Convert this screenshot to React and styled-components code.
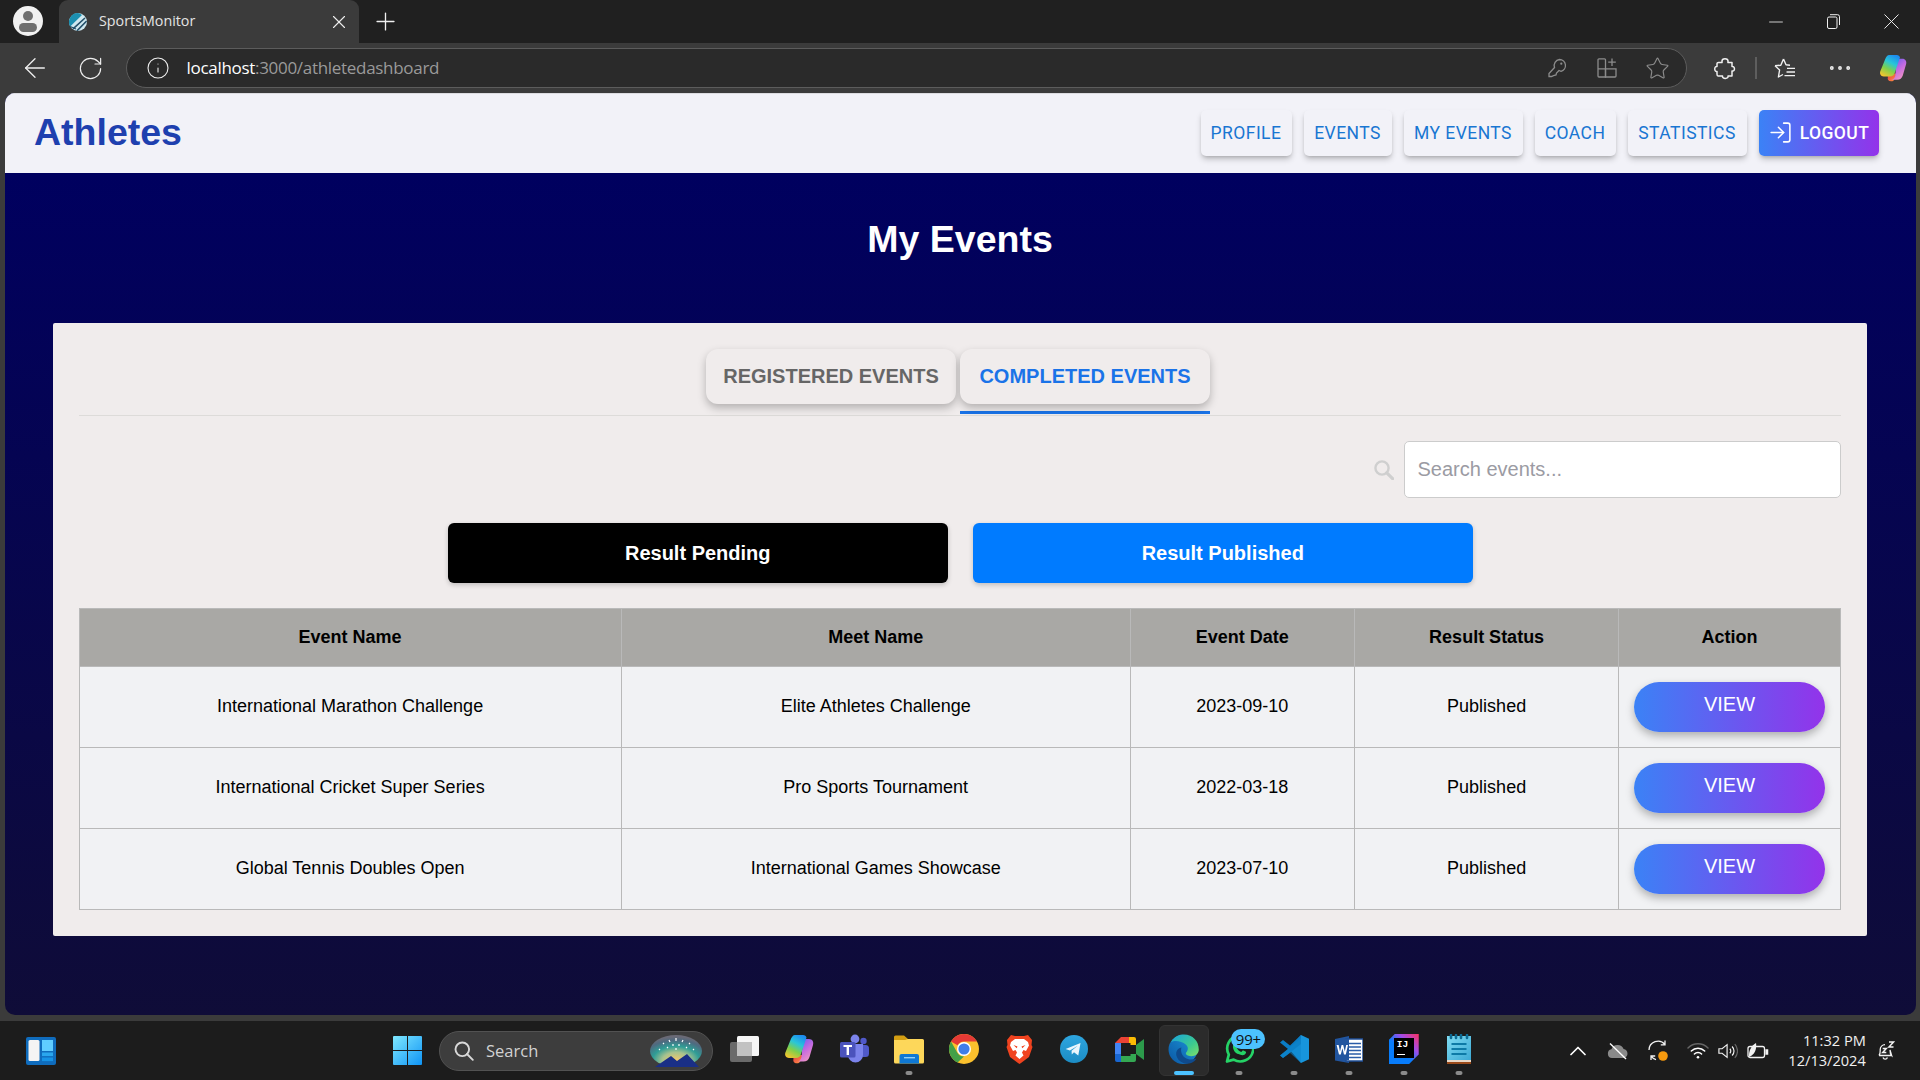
import React from "react";
import styled, { createGlobalStyle } from "styled-components";
import { ArrowLeft, RotateCw, Info, X, Plus, Minus, LogIn, Star, ChevronUp, MoreHorizontal } from "lucide-react";

const Global = createGlobalStyle`
  html, body { margin: 0; padding: 0; height: 100%; overflow: hidden; background: #3b3b3b; }
  * { box-sizing: border-box; }
  #root { height: 1080px; }
`;

const Screen = styled.div`
  width: 1920px; height: 1080px; display: flex; flex-direction: column;
  background: #3b3b3b; font-family: "Liberation Sans", Arial, sans-serif;
`;

/* ---------- browser chrome ---------- */
const TabStrip = styled.div`
  height: 43px; flex: none; background: #202020; display: flex; align-items: stretch; padding-left: 13px;
`;
const Avatar = styled.div`
  width: 30px; height: 30px; margin-top: 6px; border-radius: 50%; background: #f1f1f1;
  display: flex; align-items: center; justify-content: center;
`;
const BrowserTab = styled.div`
  width: 300px; margin-left: 16px; background: #3b3b3b; border-radius: 9px 9px 0 0;
  display: flex; align-items: center; padding-left: 10px; color: #e8e8e8;
`;
const TabTitle = styled.span`
  margin: 0 0 2px 12px; flex: 1; font: 14.3px "Open Sans", sans-serif; color: #e4e4e4;
`;
const TabClose = styled.span`
  width: 22px; margin-right: 9px; display: flex; justify-content: center;
`;
const NewTab = styled.div`
  width: 30px; margin-left: 11px; padding-bottom: 1px; display: flex; align-items: center; justify-content: center;
`;
const WindowControls = styled.div`
  margin-left: auto; display: flex; align-items: center;
`;
const ControlSlot = styled.div`
  width: ${(p) => p.$w}px; display: flex; justify-content: center; align-items: center;
`;

const Toolbar = styled.div`
  height: 50px; flex: none; background: #3b3b3b; display: flex; align-items: center; padding: 0 0 0 7px;
`;
const ToolSlot = styled.div`
  width: ${(p) => p.$w || 40}px; height: 36px; flex: none; display: flex; align-items: center; justify-content: center;
  margin-left: ${(p) => p.$ml || 0}px;
`;
const AddressBar = styled.div`
  width: 1561.5px; height: 40px; margin-left: 7.5px; flex: none; display: flex; align-items: center;
  background: #2a2a2a; border: 1.5px solid #5c5c5c; border-radius: 20px; padding-left: 19px;
`;
const Url = styled.div`
  margin: 0 0 2px 17px; flex: 1; font: 17px "Open Sans", sans-serif; color: #9a9a9a; letter-spacing: -0.3px;
  b { color: #fff; font-weight: 400; }
`;
const AddressIcons = styled.div`
  display: flex; align-items: center; margin-right: 4px;
`;
const Divider = styled.div`
  width: 1.5px; height: 22px; background: #5e5e5e; margin: 0 13.5px 0 11px; flex: none;
`;

/* ---------- page viewport ---------- */
const Viewport = styled.div`
  flex: none; height: 922px; margin: 0 4.5px; border-radius: 10px; overflow: hidden;
  display: flex; flex-direction: column;
  background: linear-gradient(to bottom, #00005f 9%, #0f0c38 100%);
`;
const NavBar = styled.header`
  height: 80px; flex: none; background: #f2f2f8; display: flex; align-items: center; padding: 0 37px 2px 29.5px;
  border-top: 1px solid #dcdce0;
`;
const Brand = styled.div`
  font-size: 37.5px; font-weight: 700; color: #1e40af;
`;
const NavLinks = styled.nav`
  margin-left: auto; display: flex; gap: 12px;
`;
const NavButton = styled.button`
  height: 46px; width: ${(p) => p.$w}px; border: 0; border-radius: 5px; background: #f2f2f8; color: #1976d2;
  font: 400 17.5px Roboto, sans-serif; letter-spacing: 0.45px; padding: 0;
  box-shadow: 0 4px 6px -1px rgba(0,0,0,.22), 0 2px 4px -2px rgba(0,0,0,.2);
`;
const LogoutButton = styled(NavButton)`
  background: linear-gradient(to right, #3b82f6, #9333ea); color: #fff; font-weight: 500;
  display: flex; align-items: center; justify-content: center; gap: 7px;
`;
const PageTitle = styled.h1`
  margin: 0; height: 150px; padding-top: 44px; text-align: center; color: #fff; font-size: 37.5px; line-height: 45px; font-weight: 700;
`;
const Panel = styled.main`
  margin: 0 49px 0 48px; background: #f0ecec; padding: 26px 26px 26px; border-radius: 2px;
`;
const TabsBar = styled.div`
  display: flex; justify-content: center; gap: 4px; padding: 0 3px 1px 0; border-bottom: 1.5px solid #dddbd9;
`;
const TabItem = styled.div`
  width: 250px; height: 65px; border-bottom: 3.75px solid ${(p) => (p.$active ? "#1a73e8" : "transparent")};
`;
const TabCard = styled.div`
  height: 55px; border-radius: 12px; background: #f0ecec; display: flex; align-items: center; justify-content: center;
  font-size: 20px; font-weight: 700; color: ${(p) => (p.$active ? "#1a73e8" : "#666")};
  box-shadow: 0 4px 8px rgba(0,0,0,.25);
`;
const SearchRow = styled.div`
  display: flex; justify-content: flex-end; align-items: center; gap: 10px; margin-top: 25px;
`;
const SearchInput = styled.input`
  width: 436.5px; height: 57px; border: 1.25px solid #ccc; border-radius: 5px; background: #fff;
  font: 20px "Liberation Sans", Arial, sans-serif; padding: 0 12.5px; outline: none;
  &::placeholder { color: #9b9ba3; opacity: 1; }
`;
const FilterRow = styled.div`
  display: flex; justify-content: center; gap: 25px; margin-top: 25px; padding-left: 1.5px;
`;
const FilterButton = styled.button`
  width: 500px; height: 60px; border: 0; border-radius: 6px; background: ${(p) => p.$bg}; color: #fff;
  font: 700 20px "Liberation Sans", Arial, sans-serif; box-shadow: 0 2px 5px rgba(0,0,0,.2);
`;
const EventTable = styled.table`
  width: 100%; margin-top: 25px; border-collapse: collapse; table-layout: fixed; font-size: 18px; color: #000;
`;
const HeadCell = styled.th`
  height: 58px; background: #a9a8a5; border: 1.25px solid #b9b9b9; font-weight: 700; text-align: center; padding: 0;
`;
const Cell = styled.td`
  height: 81px; background: #f1f2f4; border: 1.25px solid #b9b9b9; text-align: center; padding: 0 0 2px;
`;
const ViewButton = styled.button`
  display: block; margin: 2px auto 0; width: 191px; height: 50px; border: 0; border-radius: 25px; padding: 0 0 6px;
  background: linear-gradient(to right, #3b82f6, #9333ea); color: #fff;
  font: 400 20px "Liberation Sans", Arial, sans-serif;
  box-shadow: 0 4px 8px rgba(0,0,0,.28);
`;

/* ---------- taskbar ---------- */
const Taskbar = styled.footer`
  margin-top: 6px; height: 59px; flex: none; background: #1c1c1c; display: flex; align-items: center; padding-left: 26px;
`;
const StartSlot = styled.div`
  margin-left: 337px; width: 29px; height: 29px; flex: none; display: flex;
`;
const SearchPill = styled.div`
  margin-left: 17px; width: 274px; height: 40px; flex: none; border-radius: 20px; background: #3d3d3d; border: 1px solid #525252;
  display: flex; align-items: center; padding: 0 9px 0 14px; color: #d2d2d2; font: 16.5px "Open Sans", sans-serif;
`;
const PillLabel = styled.span`
  margin-left: 12px; flex: 1;
`;
const AppRow = styled.div`
  margin-left: 4px; display: flex; flex: none;
`;
const AppSlot = styled.div`
  position: relative; width: 54.95px; height: 51px; display: flex; align-items: center; justify-content: center; padding-bottom: 3px;
`;
const AppGlyph = styled.span`
  position: relative; display: flex;
`;
const ActiveBack = styled.div`
  position: absolute; left: 2.4px; right: 2.4px; top: 0; bottom: 0; border-radius: 6px; background: #2b2b2b; border: 1px solid #333;
`;
const RunDot = styled.div`
  position: absolute; bottom: 1px; left: 50%; transform: translateX(-50%); height: 4px; border-radius: 2px;
  width: ${(p) => (p.$active ? 20 : 7)}px; background: ${(p) => (p.$active ? "#4cc2ff" : "#8b8b8b")};
`;
const Badge = styled.div`
  position: absolute; top: 4px; left: 20px; width: 34px; height: 20px; border-radius: 10px; background: #4cc2ff; color: #111;
  font: 15px "Open Sans", sans-serif; display: flex; align-items: center; justify-content: center; letter-spacing: -0.2px;
`;
const Tray = styled.div`
  margin-left: 71.7px; display: flex; align-items: center; flex: none; color: #fff;
`;
const TraySlot = styled.div`
  width: ${(p) => p.$w}px; display: flex; justify-content: center; align-items: center;
`;
const Clock = styled.div`
  width: 88px; text-align: right; color: #f0f0f0; font: 14.6px/20px "Open Sans", sans-serif; margin-bottom: 2px; white-space: nowrap;
`;
const BellSlot = styled.div`
  width: 32px; margin-left: 4px; display: flex; justify-content: center;
`;

/* ---------- icons ---------- */
const WIN = { width: 30, height: 30, viewBox: "0 0 30 30" };

const CopilotIcon = ({ size = 30, id = "c" }) => (
  <svg width={size} height={size} viewBox="0 0 30 30">
    <defs>
      <linearGradient id={`${id}a`} x1="0.7" y1="0" x2="0.2" y2="1">
        <stop offset="0" stopColor="#1d8cf0" /><stop offset=".35" stopColor="#29c6d8" /><stop offset=".65" stopColor="#7ed04b" /><stop offset="1" stopColor="#f4c52e" />
      </linearGradient>
      <linearGradient id={`${id}b`} x1="0.2" y1="0" x2="0.8" y2="1">
        <stop offset="0" stopColor="#6a5cf0" /><stop offset=".5" stopColor="#c66be0" /><stop offset="1" stopColor="#f59ac0" />
      </linearGradient>
      <linearGradient id={`${id}d`} x1="0" y1="0" x2="1" y2="1">
        <stop offset="0" stopColor="#e8354a" /><stop offset="1" stopColor="#ff9a3c" />
      </linearGradient>
    </defs>
    <path d="M9 21 H19 L16.5 27 C15.8 28.7 14.5 29.3 13 29.3 C10 29.3 8.8 27 9.5 25z" fill={`url(#${id}d)`} />
    <path d="M19 5 H25 C28.3 5 30 7.8 29 11 L25.5 23 C24.5 26 22.5 27.5 19.5 27.5 H13 C15.6 27.5 16.8 25.5 17.5 23z" fill={`url(#${id}b)`} />
    <path d="M11 1 H19 C21 1 22 2 22.5 3.5 L17 20 C16.3 22.5 14.5 24 12 24 H5 C2 24 .4 21.6 1.4 18.6 L6.5 6 C7.5 3 9 1 11 1z" fill={`url(#${id}a)`} />
  </svg>
);

const EdgeIcon = () => (
  <svg {...WIN} width="31" height="31">
    <defs>
      <linearGradient id="eg1" x1="0" y1="1" x2="1" y2="0"><stop offset="0" stopColor="#0b56a4" /><stop offset="1" stopColor="#1d9bdb" /></linearGradient>
      <linearGradient id="eg2" x1="0" y1="0" x2="1" y2="1"><stop offset="0" stopColor="#1aa3dc" /><stop offset=".6" stopColor="#3ccb8f" /><stop offset="1" stopColor="#7fe06a" /></linearGradient>
    </defs>
    <circle cx="14.5" cy="15" r="14" fill="url(#eg1)" />
    <path d="M3 8 C6 2 12 .5 15.5 .6 C24 .8 29.8 7 29.8 15 C29.8 19 26.5 21.5 22.5 21.5 C19 21.5 16.5 20 17.5 18 C19.5 16 20 13 17.5 10.5 C13 6.5 6 6 3 8z" fill="url(#eg2)" />
    <path d="M13 13 C8.5 14 7 18 8.5 22 C10.5 27.5 17 30 22.5 28 C25 27 26.8 25.5 27.6 23.8 C24 25 19.5 25.3 16.5 23 C13 20.5 12 16 13 13z" fill="#0f4a8c" />
  </svg>
);

const Icons = {
  widgets: (
    <svg width="30" height="28" viewBox="0 0 30 28">
      <rect width="30" height="28" rx="2" fill="#0f6cbd" />
      <rect x="2.5" y="3" width="11" height="21" rx="1.5" fill="#f4f4f4" />
      <rect x="16" y="3" width="11" height="11" fill="#60cdff" />
      <rect x="16" y="15.5" width="11" height="3.6" fill="#2aa7ee" />
      <rect x="16" y="20.5" width="11" height="3.6" fill="#1693e6" />
    </svg>
  ),
  start: (
    <svg width="29" height="29" viewBox="0 0 29 29">
      <defs><linearGradient id="st" x1="0" y1="0" x2="1" y2="1"><stop offset="0" stopColor="#7fe8ff" /><stop offset="1" stopColor="#0f94f5" /></linearGradient></defs>
      <path d="M0 1 a1 1 0 0 1 1-1 H14 V14 H0z M15 0 H28 a1 1 0 0 1 1 1 V14 H15z M0 15 H14 V29 H1 a1 1 0 0 1-1-1z M15 15 H29 V28 a1 1 0 0 1-1 1 H15z" fill="url(#st)" />
    </svg>
  ),
  taskview: (
    <svg {...WIN}>
      <rect x="1" y="8" width="22" height="20" rx="2" fill="#6a6a6a" />
      <rect x="8" y="2" width="22" height="20" rx="1.5" fill="#f6f6f6" />
      <rect x="8" y="8" width="15" height="14" fill="#c2c2c2" />
    </svg>
  ),
  teams: (
    <svg {...WIN}>
      <circle cx="24.5" cy="7" r="3.2" fill="#5059c9" />
      <rect x="20" y="11" width="10" height="12" rx="3.5" fill="#5059c9" />
      <circle cx="16" cy="5" r="4.4" fill="#7b83eb" />
      <path d="M9 10 H24 V21 a7.5 7.5 0 0 1-15 0z" fill="#7b83eb" />
      <rect x="1" y="8" width="15.5" height="15.5" rx="1.5" fill="#4b53bc" />
      <path d="M4.5 11 H13 V13 H10 V21 H7.6 V13 H4.5z" fill="#fff" />
    </svg>
  ),
  explorer: (
    <svg {...WIN} height="29" viewBox="0 0 30 29">
      <path d="M0 2 a1.5 1.5 0 0 1 1.5-1.5 H10 L14 4 H28 V10 H0z" fill="#d39e12" />
      <path d="M0 5 H11 L14 4 H28.5 a1.5 1.5 0 0 1 1.5 1.5 V27 a1.5 1.5 0 0 1-1.5 1.5 H1.5 A1.5 1.5 0 0 1 0 27z" fill="#fdd75a" />
      <path d="M5.5 21 a2 2 0 0 1 2-2 H23 a2 2 0 0 1 2 2 v7.5 H5.5z" fill="#0f78d4" />
      <rect x="10" y="22" width="11" height="1.4" fill="#8fd0f8" />
    </svg>
  ),
  chrome: (
    <svg {...WIN}>
      <circle cx="15" cy="15" r="15" fill="#fbc02d" />
      <path d="M15 0 A15 15 0 0 1 28 7.5 H15 A7.5 7.5 0 0 0 8.5 11.3 L2 7.5 A15 15 0 0 1 15 0z" fill="#e53935" />
      <path d="M2 7.5 L8.5 19 A7.5 7.5 0 0 0 15 22.5 L8.5 28.5 A15 15 0 0 1 2 7.5z" fill="#43a047" />
      <circle cx="15" cy="15" r="7" fill="#fff" />
      <circle cx="15" cy="15" r="5.6" fill="#3f7de8" />
    </svg>
  ),
  brave: (
    <svg width="27" height="30" viewBox="0 0 27 30">
      <path d="M5 1 L9 2 H18 L22 1 L26 6 L25.5 11 L26.5 13 L23 23 L15 29 L13.5 30 L12 29 L4 23 L.5 13 L1.5 11 L1 6z" fill="#f0431f" />
      <path d="M5 8 L9 5 H18 L22 8 L23 11.5 L20 17 L17.5 16 L16 18.5 L17.5 21.5 L13.5 25 L9.5 21.5 L11 18.5 L9.5 16 L7 17 L4 11.5z" fill="#fff" />
      <path d="M7.5 11 l4 1.4 -.8 1.8z M19.5 11 l-4 1.4 .8 1.8z" fill="#f0431f" />
    </svg>
  ),
  telegram: (
    <svg {...WIN} width="28" height="28">
      <defs><linearGradient id="tg" x1="0.5" y1="0" x2="0.5" y2="1"><stop offset="0" stopColor="#2ea6e0" /><stop offset="1" stopColor="#1c8cc4" /></linearGradient></defs>
      <circle cx="15" cy="15" r="15" fill="url(#tg)" />
      <path d="M6 15 L22 8.5 L19.6 22 L15 18.6 L12.6 21 L12.4 17 L19 11.5 L10.6 16.5z" fill="#eaf6fc" />
    </svg>
  ),
  meet: (
    <svg width="29" height="25" viewBox="0 0 29 25">
      <path d="M6 0 H16 V6 H6z" fill="#ea4335" />
      <path d="M6 0 V6 H0z" fill="#ea4335" />
      <path d="M14 0 H19 a2 2 0 0 1 2 2 V8 H15.5 V6 H14z" fill="#fbbc04" />
      <path d="M0 6 H6 V17 H0z" fill="#4285f4" />
      <path d="M0 17 H6 V25 H2 a2 2 0 0 1-2-2z" fill="#1967d2" />
      <path d="M6 19 H15.5 V17 H21 V23 a2 2 0 0 1-2 2 H6z" fill="#34a853" />
      <path d="M21 8 V17 L29 23 V2z" fill="#2c9a4b" />
    </svg>
  ),
  edge: <EdgeIcon />,
  whatsapp: (
    <svg {...WIN}>
      <path d="M3 27.5 L4.8 20.6 A13 13 0 1 1 9.6 25.6z" fill="none" stroke="#25d366" strokeWidth="2.7" strokeLinejoin="round" />
      <path d="M10.5 9 c1.4-1 2-.6 2.7 1 l.5 1.4 -1.4 1.8 c1.2 2.3 2.8 3.8 5 4.8 l1.6-1.7 2.6 1.2 c.7.3.7 1 .3 1.8 -1 2-3.4 2.4-6 1.2 C12 20 9.6 17.4 9 13.6 8.7 11.4 9.3 10 10.5 9z" fill="#25d366" />
    </svg>
  ),
  vscode: (
    <svg {...WIN}>
      <path d="M22 1 L30 4.8 V25.2 L22 29 L10 15z" fill="#1795dc" />
      <path d="M22 1 V10 L8 21 L4 24 L1 21.5 L9 15 L1 8.5 L4 6 L11 11.5z" fill="#0a7cc4" />
      <path d="M4 24 L1 21.5 L22 4 V10 L22 20 V29 L11 19 z" fill="#0f86ce" opacity=".55" />
    </svg>
  ),
  word: (
    <svg width="28" height="27" viewBox="0 0 28 27">
      <path d="M0 3 L14 0 V27 L0 24.5z" fill="#21559f" />
      <rect x="11" y="3" width="17" height="22" fill="#fff" />
      <rect x="11" y="3" width="17" height="22" fill="none" stroke="#1e4e96" strokeWidth="1.5" />
      <path d="M14 7.5 H26 M14 11 H26 M14 14.5 H26 M14 18 H26 M14 21.5 H26" stroke="#2a5ca8" strokeWidth="1.6" />
      <rect x="0" y="3" width="14" height="21" fill="#21559f" />
      <path d="M1.6 9 H3.6 L5 15.6 L6.6 9 H8.2 L9.8 15.6 L11.2 9 H13 L10.8 18.5 H9 L7.4 12.2 L5.8 18.5 H4z" fill="#fff" />
    </svg>
  ),
  notepad: (
    <svg width="26" height="30" viewBox="0 0 26 30">
      <defs><linearGradient id="np" x1="0" y1="0" x2="1" y2="1"><stop offset="0" stopColor="#7fdcf3" /><stop offset="1" stopColor="#3ca9d4" /></linearGradient></defs>
      <rect x="1" y="2" width="24" height="24" fill="url(#np)" />
      <rect x="1" y="26" width="24" height="2" fill="#e8d8c8" />
      <rect x="1" y="28" width="24" height="2" fill="#9a4a1a" />
      <path d="M5 1 v3 M10 1 v3 M15 1 v3 M21 1 v3" stroke="#0d6a92" strokeWidth="2.6" strokeLinecap="round" />
      <path d="M5.5 10 H20.5 M5.5 15 H20.5 M5.5 20 H20.5" stroke="#0d7aa6" strokeWidth="2" />
    </svg>
  ),
  search: (
    <svg width="20" height="20" viewBox="0 0 20 20" fill="none" stroke="#d8d8d8" strokeWidth="1.9">
      <circle cx="8.3" cy="8.3" r="6.8" /><path d="M13 13 L18.8 18.8" strokeLinecap="round" />
    </svg>
  ),
  panelSearch: (
    <svg width="20" height="20" viewBox="0 0 20 20" fill="none" stroke="#cfcfcf" strokeWidth="2.4">
      <circle cx="8" cy="8" r="6.6" /><path d="M12.8 12.8 L18.6 18.6" strokeWidth="3.2" strokeLinecap="round" />
    </svg>
  ),
  art: (
    <svg width="54" height="32" viewBox="0 0 54 32">
      <defs>
        <radialGradient id="ar" cx=".5" cy=".8" r=".75"><stop offset="0" stopColor="#f6c869" /><stop offset=".35" stopColor="#a7c28e" /><stop offset=".6" stopColor="#2f9d96" /><stop offset=".85" stopColor="#4e6a80" /><stop offset="1" stopColor="#6a6a76" /></radialGradient>
      </defs>
      <ellipse cx="27" cy="16" rx="26" ry="16" fill="url(#ar)" />
      <path d="M6 32 L22 21 L28 26 L38 19 L50 32z" fill="#1a2f86" />
      <path d="M10 14 l1 1 M14 8 l1 1 M20 5 l1 2 M27 3 v3 M34 5 l-1 2 M41 8 l-1 1 M45 14 l-1 1 M18 12 l1 1 M38 12 l-1 1 M24 9 v2 M30 9 v2 M27 13 v2" stroke="#fff" strokeWidth="1.2" />
    </svg>
  ),
  onedrive: (
    <svg width="22" height="18" viewBox="0 0 22 18">
      <path d="M5 16 a4.4 4.4 0 0 1-.6-8.7 A6.6 6.6 0 0 1 16.6 7 a4.6 4.6 0 0 1 .4 9z" fill="#8a8a8a" />
      <path d="M3 1.5 L19 17" stroke="#fff" strokeWidth="1.4" />
    </svg>
  ),
  sync: (
    <svg width="22" height="24" viewBox="0 0 22 24" fill="none" stroke="#f2f2f2" strokeWidth="1.3">
      <path d="M2 11 A9 9 0 0 1 18 5.5 M18 1.5 V5.8 H13.8" />
      <path d="M4 21 V17 H8.2 M4 17.2 A9 9 0 0 0 9 20.6" />
      <circle cx="16" cy="17" r="4.8" fill="#f79a0e" stroke="none" />
    </svg>
  ),
  wifi: (
    <svg width="22" height="18" viewBox="0 0 22 18" fill="none" stroke="#fff" strokeWidth="1.5" strokeLinecap="round">
      <path d="M1 6 A14 14 0 0 1 21 6" stroke="#666" />
      <path d="M4.3 9 A9.5 9.5 0 0 1 17.7 9" />
      <path d="M7.4 12 A5 5 0 0 1 14.6 12" />
      <circle cx="11" cy="15.3" r="1.3" fill="#fff" stroke="none" />
    </svg>
  ),
  volume: (
    <svg width="22" height="18" viewBox="0 0 22 18" fill="none" stroke="#f2f2f2" strokeWidth="1.3">
      <path d="M1 6.5 H4.5 L10 2 V16 L4.5 11.5 H1z" />
      <path d="M13 6.5 a3.5 3.5 0 0 1 0 5 M15.5 4 a7 7 0 0 1 0 10" />
      <path d="M18.5 1.5 a11 11 0 0 1 0 15" stroke="#666" />
    </svg>
  ),
  battery: (
    <svg width="22" height="18" viewBox="0 0 22 18" fill="none" stroke="#f2f2f2" strokeWidth="1.3">
      <rect x="1" y="4.5" width="16.5" height="11" rx="2" />
      <path d="M19 8 h1.6 v4 H19z" fill="#f2f2f2" />
      <path d="M2 15 C1.5 9 4 4 9 1 C9.8 6 8.5 11 4 14z" fill="#f2f2f2" stroke="none" />
    </svg>
  ),
  bell: (
    <svg width="20" height="20" viewBox="0 0 20 20" fill="none" stroke="#f2f2f2" strokeWidth="1.3">
      <path d="M3 14.5 C4.5 13 4.2 11 4.2 8.5 A5 5 0 0 1 9 3.6 M14 9 C14 11.5 14 13 15.6 14.5z M3 14.5 H15.6" />
      <path d="M7 16.5 a2.3 2.3 0 0 0 4.4 0" />
      <path d="M6.7 7.5 H10.3 L6.7 11.5 H10.3 M13 1 H17.5 L13 6 H17.5" strokeWidth="1.5" />
    </svg>
  ),
  key: (
    <svg width="20" height="20" viewBox="0 0 20 20" fill="none" stroke="#8c8c8c" strokeWidth="1.3">
      <path d="M12.5 1.5 a6 6 0 0 1 1.5 11.8 L12 12.5 L9.5 15 L9 17 L6.5 17.6 L4.5 18.5 L2 18.5 V15.5 L7.5 9.5 A6 6 0 0 1 12.5 1.5z" />
      <circle cx="14.3" cy="5.7" r="1.1" fill="#8c8c8c" stroke="none" />
    </svg>
  ),
  apps: (
    <svg width="20" height="20" viewBox="0 0 20 20" fill="none" stroke="#8c8c8c" strokeWidth="1.3">
      <path d="M1 1.8 a1 1 0 0 1 1-1 H7.5 a1 1 0 0 1 1 1 V19 H2 a1 1 0 0 1-1-1z" />
      <path d="M8.5 10.8 H19 V18 a1 1 0 0 1-1 1 H8.5z M1 10.8 H8.5" />
      <path d="M15 .5 V8 M11.2 4.2 H18.8" />
    </svg>
  ),
  puzzle: (
    <svg width="22" height="23" viewBox="0 0 22 23" fill="none" stroke="#f0f0f0" strokeWidth="1.5" strokeLinejoin="round">
      <path d="M8 4 C8 1 14 1 14 4 C14 5 13.8 5.2 14 5.5 H18 V9.5 C21 8.5 21.5 15 18 14 V19 H14 C15 22 8 22.5 8.5 19 H4 C3 19 3 18 3 17 V14.5 C0 15 0 9 3 9.5 V6.5 C3 5.5 3.5 5.5 4.5 5.5 H8 C8.2 5.2 8 5 8 4z" />
    </svg>
  ),
  favs: (
    <svg width="22" height="21" viewBox="0 0 22 21" fill="none" stroke="#f0f0f0" strokeWidth="1.4" strokeLinejoin="round">
      <path d="M9.5 1 L12 6.8 L16 7.2 M1 7.8 L6.8 7.2 L9.5 1 M1 7.8 L5.6 12 L4.4 19 L9 16.5 M12 8 " />
      <path d="M13 10.4 H21 M12.5 14 H21 M10.5 17.6 H21" />
    </svg>
  ),
  restore: (
    <svg width="13" height="15" viewBox="0 0 13 15" fill="none" stroke="#f0f0f0" strokeWidth="1">
      <rect x=".5" y="3" width="9.5" height="11.5" rx="1.5" />
      <path d="M3 .7 H10.5 a2 2 0 0 1 2 2 V11" />
    </svg>
  ),
  favicon: (
    <svg width="18" height="18" viewBox="0 0 18 18">
      <circle cx="9" cy="9" r="9" fill="#cfe8f0" />
      <path d="M9 0 A9 9 0 0 0 1.2 13.5 L13 2 A9 9 0 0 0 9 0z" fill="#1c8fb0" />
      <path d="M4 15.8 L16 5 M8 17.8 L17.6 8" stroke="#24506a" strokeWidth="1.6" />
      <path d="M1.2 13.5 L7 16" stroke="#24506a" strokeWidth="1.2" />
    </svg>
  ),
  person: (
    <svg width="20" height="22" viewBox="0 0 20 22">
      <circle cx="10" cy="6" r="5" fill="#6f6f6f" />
      <rect x="1" y="13" width="18" height="9" rx="4.5" fill="#6f6f6f" />
    </svg>
  ),
};

const IntellijIcon = styled.div`
  position: relative; width: 30px; height: 30px;
  background: linear-gradient(45deg, #087cfa 0%, #087cfa 42%, #a34be8 68%, #fe315d 100%);
  clip-path: polygon(20% 0, 100% 0, 100% 68%, 68% 100%, 0 100%, 0 20%);
`;
const IntellijFace = styled.div`
  position: absolute; left: 5px; top: 4px; width: 20px; height: 20px; background: #000; color: #fff;
  font: 700 9.5px/11px "Liberation Mono", monospace; padding: 1px 0 0 3px;
  &::after { content: ""; position: absolute; left: 3px; bottom: 3px; width: 8px; height: 1.5px; background: #fff; }
`;

const apps = [
  { k: "taskview", n: Icons.taskview },
  { k: "copilot", n: <CopilotIcon id="tb" /> },
  { k: "teams", n: Icons.teams },
  { k: "explorer", n: Icons.explorer, run: true },
  { k: "chrome", n: Icons.chrome },
  { k: "brave", n: Icons.brave },
  { k: "telegram", n: Icons.telegram },
  { k: "meet", n: Icons.meet },
  { k: "edge", n: Icons.edge, run: true, active: true },
  { k: "whatsapp", n: Icons.whatsapp, run: true, badge: "99+" },
  { k: "vscode", n: Icons.vscode, run: true },
  { k: "word", n: Icons.word, run: true },
  { k: "idea", n: <IntellijIcon><IntellijFace>IJ</IntellijFace></IntellijIcon>, run: true },
  { k: "notepad", n: Icons.notepad, run: true },
];

const navItems = [["PROFILE", 91], ["EVENTS", 88], ["MY EVENTS", 119], ["COACH", 81], ["STATISTICS", 119]];
const rows = [
  ["International Marathon Challenge", "Elite Athletes Challenge", "2023-09-10", "Published"],
  ["International Cricket Super Series", "Pro Sports Tournament", "2022-03-18", "Published"],
  ["Global Tennis Doubles Open", "International Games Showcase", "2023-07-10", "Published"],
];
const heads = ["Event Name", "Meet Name", "Event Date", "Result Status", "Action"];
const colWidths = [542, 509, 224, 264.5, 221];

export default function App() {
  return (
    <Screen>
      <Global />
      <TabStrip>
        <Avatar>{Icons.person}</Avatar>
        <BrowserTab>
          {Icons.favicon}
          <TabTitle>SportsMonitor</TabTitle>
          <TabClose><X size={22} color="#eee" strokeWidth={1.2} /></TabClose>
        </BrowserTab>
        <NewTab><Plus size={29} color="#f0f0f0" strokeWidth={1.1} /></NewTab>
        <WindowControls>
          <ControlSlot $w={58}><Minus size={22} color="#f0f0f0" strokeWidth={0.9} /></ControlSlot>
          <ControlSlot $w={57}>{Icons.restore}</ControlSlot>
          <ControlSlot $w={58}><X size={27} color="#f0f0f0" strokeWidth={0.85} /></ControlSlot>
        </WindowControls>
      </TabStrip>
      <Toolbar>
        <ToolSlot $w={56}><ArrowLeft size={32} color="#eee" strokeWidth={1} /></ToolSlot>
        <ToolSlot $w={55}><RotateCw size={27} color="#eee" strokeWidth={1.05} /></ToolSlot>
        <AddressBar>
          <Info size={24} color="#eee" strokeWidth={1.1} />
          <Url><b>localhost</b>:3000/athletedashboard</Url>
          <AddressIcons>
            <ToolSlot $w={50}>{Icons.key}</ToolSlot>
            <ToolSlot $w={50}>{Icons.apps}</ToolSlot>
            <ToolSlot $w={50}><Star size={25} color="#8c8c8c" strokeWidth={1.1} /></ToolSlot>
          </AddressIcons>
        </AddressBar>
        <ToolSlot $w={38} $ml={19}>{Icons.puzzle}</ToolSlot>
        <Divider />
        <ToolSlot $w={30}>{Icons.favs}</ToolSlot>
        <ToolSlot $w={40} $ml={20}><MoreHorizontal size={28} color="#eee" strokeWidth={1.3} /></ToolSlot>
        <ToolSlot $w={30} $ml={18}><CopilotIcon id="tool" size={28} /></ToolSlot>
      </Toolbar>
      <Viewport>
        <NavBar>
          <Brand>Athletes</Brand>
          <NavLinks>
            {navItems.map(([label, w]) => (
              <NavButton key={label} $w={w}>{label}</NavButton>
            ))}
            <LogoutButton $w={120}><LogIn size={25} strokeWidth={1.5} />LOGOUT</LogoutButton>
          </NavLinks>
        </NavBar>
        <PageTitle>My Events</PageTitle>
        <Panel>
          <TabsBar>
            <TabItem><TabCard>REGISTERED EVENTS</TabCard></TabItem>
            <TabItem $active><TabCard $active>COMPLETED EVENTS</TabCard></TabItem>
          </TabsBar>
          <SearchRow>
            {Icons.panelSearch}
            <SearchInput placeholder="Search events..." readOnly />
          </SearchRow>
          <FilterRow>
            <FilterButton $bg="#000">Result Pending</FilterButton>
            <FilterButton $bg="#007bff">Result Published</FilterButton>
          </FilterRow>
          <EventTable>
            <colgroup>
              {colWidths.map((w) => <col key={w} style={{ width: w }} />)}
            </colgroup>
            <thead>
              <tr>{heads.map((h) => <HeadCell key={h}>{h}</HeadCell>)}</tr>
            </thead>
            <tbody>
              {rows.map((r) => (
                <tr key={r[0]}>
                  {r.map((c, i) => <Cell key={i}>{c}</Cell>)}
                  <Cell><ViewButton>VIEW</ViewButton></Cell>
                </tr>
              ))}
            </tbody>
          </EventTable>
        </Panel>
      </Viewport>
      <Taskbar>
        {Icons.widgets}
        <StartSlot>{Icons.start}</StartSlot>
        <SearchPill>
          {Icons.search}
          <PillLabel>Search</PillLabel>
          {Icons.art}
        </SearchPill>
        <AppRow>
          {apps.map((a) => (
            <AppSlot key={a.k}>
              {a.active && <ActiveBack />}
              <AppGlyph>{a.n}</AppGlyph>
              {a.badge && <Badge>{a.badge}</Badge>}
              {a.run && <RunDot $active={a.active} />}
            </AppSlot>
          ))}
        </AppRow>
        <Tray>
          <TraySlot $w={40}><ChevronUp size={28} strokeWidth={1.5} /></TraySlot>
          <TraySlot $w={40}>{Icons.onedrive}</TraySlot>
          <TraySlot $w={40}>{Icons.sync}</TraySlot>
          <TraySlot $w={40}>{Icons.wifi}</TraySlot>
          <TraySlot $w={20}>{Icons.volume}</TraySlot>
          <TraySlot $w={40}>{Icons.battery}</TraySlot>
          <Clock>11:32 PM<br />12/13/2024</Clock>
          <BellSlot>{Icons.bell}</BellSlot>
        </Tray>
      </Taskbar>
    </Screen>
  );
}
